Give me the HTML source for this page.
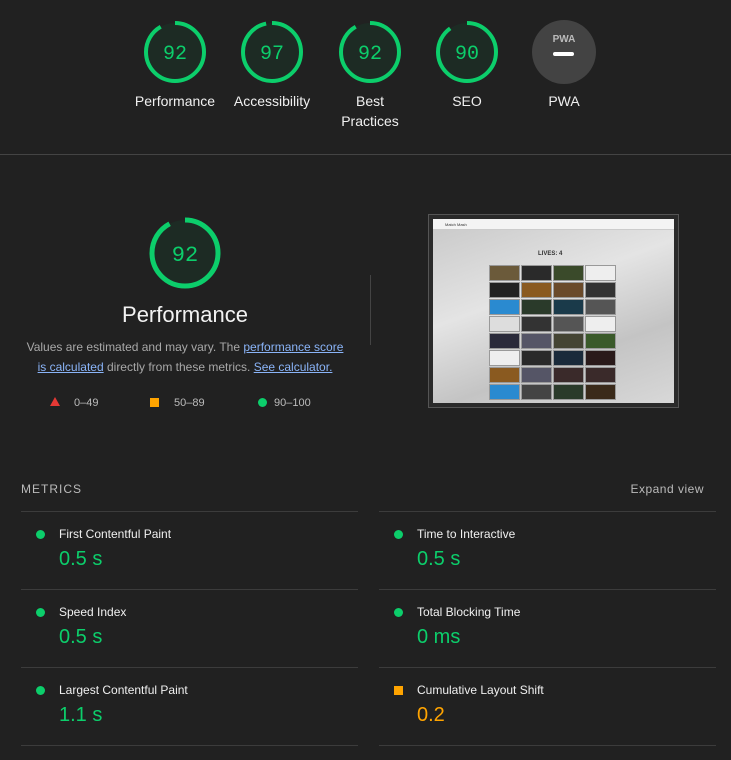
<!DOCTYPE html>
<html><head><style>
body{margin:0;background:#212121;width:731px;height:760px;overflow:hidden;font-family:"Liberation Sans",sans-serif;color:#e8e8e8;position:relative}
.g{position:absolute;text-align:center;width:100px;font-size:14px;color:#f0f0f0;line-height:20px}
.g svg{display:block;margin:0 auto 6px}
.met{position:absolute;width:337px;height:78px;border-top:1px solid #3c3c3c}
.met .l{position:absolute;left:38px;top:15px;font-size:12px;color:#f0f0f0}
.met .v{position:absolute;left:38px;top:36px;font-size:20px;color:#0cce6b}
.met .d{position:absolute;left:15px;top:18px;width:9px;height:9px;border-radius:50%;background:#0cce6b}
.cell{position:absolute;width:29px;height:16px;border:1px solid #999}
</style></head><body>
<div class="g" style="left:125px;top:19px"><svg width="66" height="66"><circle cx="33" cy="33" r="29" fill="#1d2b24" stroke="#0cce6b" stroke-width="4" stroke-dasharray="167 200" transform="rotate(-90 33 33)"/><text x="33" y="40" text-anchor="middle" fill="#0cce6b" font-size="20" font-family="Liberation Mono">92</text></svg>Performance</div>
<div class="g" style="left:222px;top:19px"><svg width="66" height="66"><circle cx="33" cy="33" r="29" fill="#1d2b24" stroke="#0cce6b" stroke-width="4" stroke-dasharray="176 200" transform="rotate(-90 33 33)"/><text x="33" y="40" text-anchor="middle" fill="#0cce6b" font-size="20" font-family="Liberation Mono">97</text></svg>Accessibility</div>
<div class="g" style="left:320px;top:19px"><svg width="66" height="66"><circle cx="33" cy="33" r="29" fill="#1d2b24" stroke="#0cce6b" stroke-width="4" stroke-dasharray="167 200" transform="rotate(-90 33 33)"/><text x="33" y="40" text-anchor="middle" fill="#0cce6b" font-size="20" font-family="Liberation Mono">92</text></svg>Best<br>Practices</div>
<div class="g" style="left:417px;top:19px"><svg width="66" height="66"><circle cx="33" cy="33" r="29" fill="#1d2b24" stroke="#0cce6b" stroke-width="4" stroke-dasharray="164 200" transform="rotate(-90 33 33)"/><text x="33" y="40" text-anchor="middle" fill="#0cce6b" font-size="20" font-family="Liberation Mono">90</text></svg>SEO</div>
<div class="g" style="left:514px;top:19px"><svg width="66" height="66"><circle cx="33" cy="33" r="32" fill="#434343"/><text x="33" y="23" text-anchor="middle" fill="#bbb" font-size="10" font-weight="bold">PWA</text><rect x="22" y="33" width="21" height="4" rx="2" fill="#fff"/></svg>PWA</div>
<div style="position:absolute;left:0;top:154px;width:731px;height:1px;background:#444"></div>

<svg style="position:absolute;left:148px;top:216px" width="74" height="74"><circle cx="37" cy="37" r="33" fill="#1d2b24" stroke="#0cce6b" stroke-width="5" stroke-dasharray="191 220" transform="rotate(-90 37 37)"/><text x="37" y="45" text-anchor="middle" fill="#0cce6b" font-size="22" font-family="Liberation Mono">92</text></svg>
<div style="position:absolute;left:0;width:370px;top:302px;text-align:center;font-size:22px;color:#f2f2f2">Performance</div>
<div style="position:absolute;left:25px;width:320px;top:337px;text-align:center;font-size:12px;line-height:20px;color:#a8a8a8">Values are estimated and may vary. The <span style="color:#8ab4f8;text-decoration:underline">performance score is calculated</span> directly from these metrics. <span style="color:#8ab4f8;text-decoration:underline">See calculator.</span></div>
<div style="position:absolute;top:397px;left:50px;font-size:11px;color:#bbb;width:300px;height:16px">
<span style="position:absolute;left:0;top:0;width:0;height:0;border-left:5px solid transparent;border-right:5px solid transparent;border-bottom:9px solid #e53935"></span><span style="position:absolute;left:24px;top:0">0–49</span>
<span style="position:absolute;left:100px;top:1px;width:9px;height:9px;background:#ffa400"></span><span style="position:absolute;left:124px;top:0">50–89</span>
<span style="position:absolute;left:208px;top:1px;width:9px;height:9px;border-radius:50%;background:#0cce6b"></span><span style="position:absolute;left:224px;top:0">90–100</span>
</div>
<div style="position:absolute;left:370px;top:275px;width:1px;height:70px;background:#444"></div>

<div style="position:absolute;left:428px;top:214px;width:249px;height:192px;border:1px solid #555;background:#2a2a2a">
<div style="position:absolute;left:4px;top:4px;width:241px;height:184px;background:linear-gradient(160deg,#c8c8c8,#e4e4e4 40%,#c4c4c4 70%,#d8d8d8)">
<div style="position:absolute;left:0;top:0;width:241px;height:11px;background:#f4f4f4;border-bottom:1px solid #ccc;font-size:4px;color:#333;line-height:11px;padding-left:12px;box-sizing:border-box">Match Mash</div>
<div style="position:absolute;left:105px;top:32px;font-size:6px;font-weight:bold;color:#333">LIVES: 4</div>
</div>
</div>
<div id="grid"></div>
<script>
var c=["#6b5a3a","#2a2a2a","#3a4a2a","#eee","#222","#8a5a20","#6a4a2a","#333","#2a8ad0","#2a3a2a","#1a3a4a","#555","#ddd","#333","#555","#eee","#2a2a3a","#556","#443","#3a5a2a","#eee","#2a2a2a","#1a2a3a","#2a1a1a","#8a5a20","#556","#3a2a2a","#3a2a2a","#2a8ad0","#444","#2a3a2a","#3a2a1a"];
var h="";for(var i=0;i<32;i++){var r=Math.floor(i/4),k=i%4;h+='<div class="cell" style="left:'+(489+k*32)+'px;top:'+(265+r*17)+'px;height:14px;background:'+c[i]+'"></div>';}
document.getElementById("grid").innerHTML=h;
</script>

<div style="position:absolute;left:21px;top:482px;font-size:12px;letter-spacing:1px;color:#bbb">METRICS</div>
<div style="position:absolute;right:27px;top:482px;font-size:12px;letter-spacing:.5px;color:#bbb">Expand view</div>

<div class="met" style="left:21px;top:511px"><span class="d"></span><span class="l">First Contentful Paint</span><span class="v">0.5 s</span></div>
<div class="met" style="left:379px;top:511px"><span class="d"></span><span class="l">Time to Interactive</span><span class="v">0.5 s</span></div>
<div class="met" style="left:21px;top:589px"><span class="d"></span><span class="l">Speed Index</span><span class="v">0.5 s</span></div>
<div class="met" style="left:379px;top:589px"><span class="d"></span><span class="l">Total Blocking Time</span><span class="v">0 ms</span></div>
<div class="met" style="left:21px;top:667px"><span class="d"></span><span class="l">Largest Contentful Paint</span><span class="v">1.1 s</span></div>
<div class="met" style="left:379px;top:667px"><span class="d" style="border-radius:0;background:#ffa400"></span><span class="l">Cumulative Layout Shift</span><span class="v" style="color:#ffa400">0.2</span></div>
<div style="position:absolute;left:21px;top:745px;width:337px;height:1px;background:#3c3c3c"></div>
<div style="position:absolute;left:379px;top:745px;width:337px;height:1px;background:#3c3c3c"></div>
</body></html>
